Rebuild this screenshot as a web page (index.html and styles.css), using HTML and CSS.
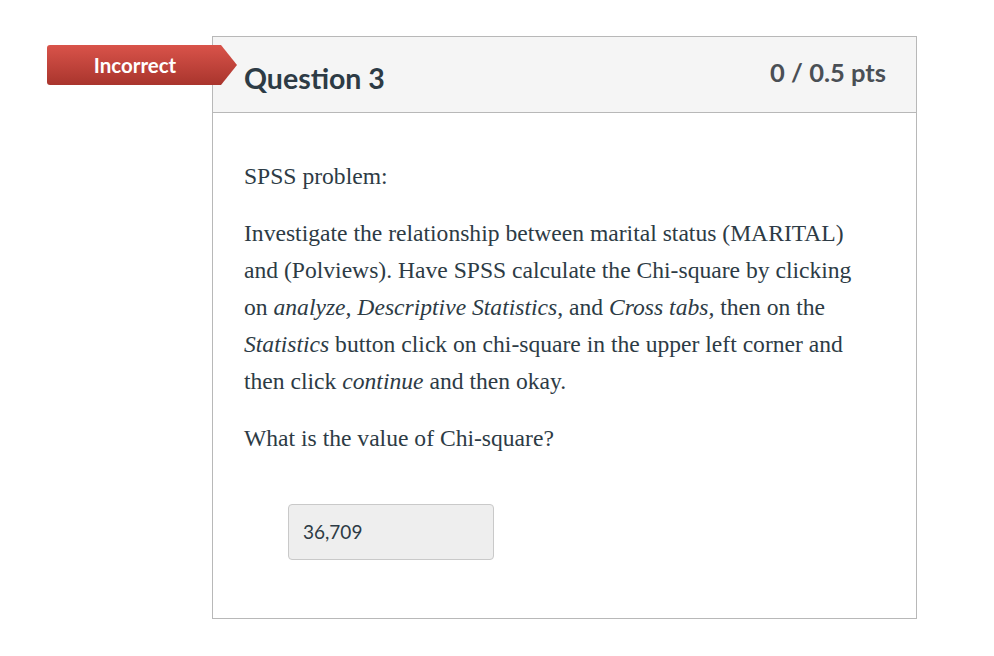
FILE: index.html
```html
<!DOCTYPE html>
<html>
<head>
<meta charset="utf-8">
<link rel="stylesheet" href="styles.css">
</head>
<body>
<div class="page">
  <div class="card">
    <div class="badge"><span class="badge-text">Incorrect</span></div>
    <div class="header">
      <h2 class="title">Question 3</h2>
      <div class="pts">0 / 0.5 pts</div>
    </div>
    <div class="body">
      <p class="p">SPSS problem:</p>
      <p class="p">Investigate the relationship between marital status (MARITAL) and (Polviews). Have SPSS calculate the Chi-square by clicking on <i>analyze, Descriptive Statistics</i>, and <i>Cross tabs,</i> then on the <i>Statistics</i> button click on chi-square in the upper left corner and then click <i>continue</i> and then okay.</p>
      <p class="p">What is the value of Chi-square?</p>
      <div class="answer">36,709</div>
    </div>
  </div>
</div>
</body>
</html>
```

FILE: styles.css
```css
html, body {
  margin: 0;
  padding: 0;
  background: #fff;
}
.page {
  padding: 36px 0 0 212px;
}
.card {
  position: relative;
  width: 703px;
  border: 1px solid #b8b8b8;
}
.badge {
  position: absolute;
  left: -166px;
  top: 8px;
  width: 190px;
  height: 40px;
  background: linear-gradient(#d9534a, #a9352d);
  border-radius: 3px 0 0 3px;
  clip-path: polygon(0 0, 174px 0, 190px 20px, 174px 40px, 0 40px);
  display: flex;
  align-items: center;
}
.badge-text {
  width: 176px;
  text-align: center;
  color: #fff;
  font-family: Lato, "Liberation Sans", sans-serif;
  font-weight: 700;
  font-size: 20.5px;
  margin-top: -1px;
}
.header {
  background: #f5f5f5;
  border-bottom: 1px solid #b8b8b8;
  height: 75px;
  padding: 0 30px 0 31px;
  display: flex;
  justify-content: space-between;
  align-items: flex-start;
}
.title {
  margin: 24px 0 0 0;
  font-family: Lato, "Liberation Sans", sans-serif;
  font-weight: 700;
  font-size: 28.5px;
  color: #2d3b45;
}
.pts {
  margin-top: 20px;
  font-family: Lato, "Liberation Sans", sans-serif;
  font-weight: 700;
  font-size: 25.5px;
  color: #4a4f55;
}
.body {
  padding: 45px 47px 58px 31px;
  font-family: "Liberation Serif", "Times New Roman", serif;
  font-size: 23.6px;
  line-height: 37px;
  color: #2d3b45;
}
.p {
  margin: 0 0 20px 0;
}
.answer {
  margin: 47px 0 0 44px;
  width: 190px;
  height: 54px;
  background: #eeeeee;
  border: 1px solid #c9c9c9;
  border-radius: 4px;
  font-family: Lato, "Liberation Sans", sans-serif;
  font-size: 19px;
  line-height: 54px;
  padding-left: 14px;
  color: #2d3b45;
}
```
